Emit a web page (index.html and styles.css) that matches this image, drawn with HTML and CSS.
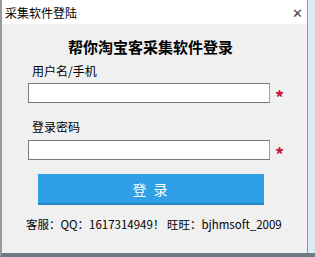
FILE: index.html
```html
<!DOCTYPE html>
<html lang="zh-CN">

<head>
    <meta charset="UTF-8">
    <title>采集软件登陆</title>
    <link rel="stylesheet" href="styles.css">
</head>

<body>
    <div class="window">
        <div class="title-bar">
            <span class="title">采集软件登陆</span>
            <span class="close">&#x2715;</span>
        </div>
        <div class="content">
            <h1>帮你淘宝客采集软件登录</h1>
            <label class="field-label">用户名/手机</label>
            <div class="field-row">
                <input type="text" class="field">
                <span class="required">*</span>
            </div>
            <label class="field-label pwd-label">登录密码</label>
            <div class="field-row">
                <input type="password" class="field">
                <span class="required">*</span>
            </div>
            <button class="btn-login">登 录</button>
            <div class="footer">客服：QQ：1617314949！ 旺旺：bjhmsoft_2009</div>
        </div>
    </div>
</body>

</html>
```

FILE: styles.css
```css
body {
    margin: 0;
    padding: 0;
    font-family: "Noto Sans CJK SC", sans-serif;
    background: #ffffff;
}

.window {
    width: 315px;
    height: 257px;
    box-sizing: border-box;
    border-left: 2px solid #9a9a9a;
    border-bottom: 4px solid #6f7a86;
    display: flex;
    flex-direction: column;
    position: relative;
    background: #f0f0f0;
}

/* right frame strip */
.window::after {
    content: "";
    position: absolute;
    top: 0;
    right: 0;
    width: 7px;
    height: 100%;
    background: #dde9f3;
    border-left: 1px solid #8f9aa6;
}

.title-bar {
    height: 24px;
    background: #ffffff;
    display: flex;
    align-items: center;
    justify-content: space-between;
    padding: 0 12px 0 3px;
}

.title {
    font-size: 12px;
    color: #000;
}

.close {
    font-size: 13px;
    color: #444;
}

.content {
    flex: 1;
    display: flex;
    flex-direction: column;
    padding: 13px 0 0 26px;
}

h1 {
    margin: 0 0 0 40px;
    font-size: 15px;
    font-weight: bold;
    line-height: 20px;
    color: #000;
}

.field-label {
    font-size: 12px;
    line-height: 16px;
    margin: 6px 0 0 4px;
    color: #000;
}

.pwd-label {
    margin-top: 16px;
}

.field-row {
    display: flex;
    align-items: center;
    height: 20px;
    margin-top: 4px;
}

.pwd-label + .field-row {
    margin-top: 5px;
}

.field {
    width: 242px;
    height: 20px;
    box-sizing: border-box;
    margin: 0;
    border: 1px solid #7a7a7a;
    border-right-color: #a0a0a0;
    background: #fff;
}

.required {
    color: #c8163c;
    font-size: 18px;
    font-weight: bold;
    line-height: 1;
    margin: 8px 0 0 5px;
}

.btn-login {
    width: 226px;
    height: 31px;
    margin: 14px 0 0 10px;
    border: none;
    border-bottom: 2px solid #2a85c4;
    background: #2fa0e8;
    color: #fff;
    font-family: "Noto Sans CJK SC", sans-serif;
    font-size: 14px;
    letter-spacing: 2px;
}

.footer {
    margin: 11px 0 0 -2px;
    font-size: 11.5px;
    line-height: 17px;
    color: #000;
    white-space: nowrap;
}
```
